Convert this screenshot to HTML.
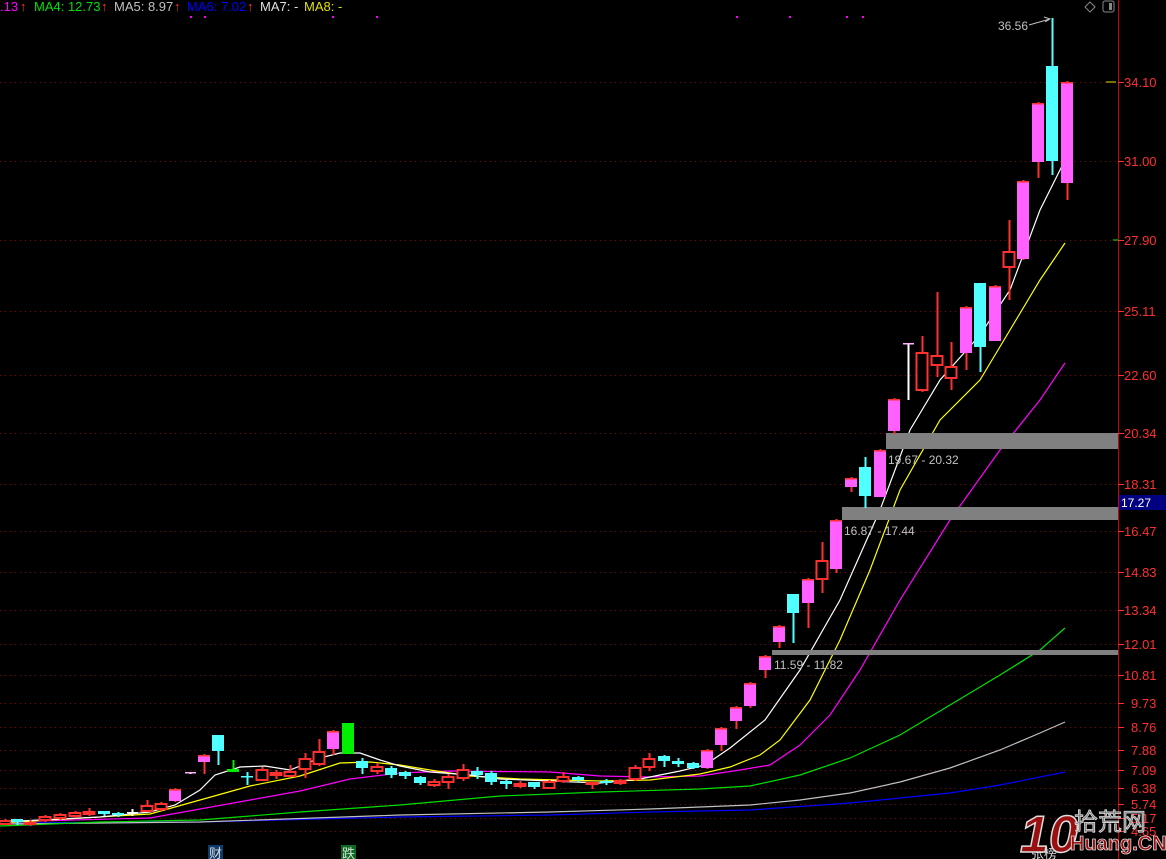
<!DOCTYPE html>
<html><head><meta charset="utf-8"><style>
html,body{margin:0;padding:0;background:#000;width:1166px;height:859px;overflow:hidden}
svg{display:block}
text{font-family:"Liberation Sans","Noto Sans CJK SC",sans-serif}
</style></head><body>
<svg id="s" width="1166" height="859" xmlns="http://www.w3.org/2000/svg">
<rect width="1166" height="859" fill="#000"/>
<g id="grid"></g>
<g id="ma" fill="none" stroke-width="1.2"></g>
<rect x="886" y="433" width="232" height="16" fill="#808080"/>
<rect x="842" y="507" width="276" height="13" fill="#808080"/>
<rect x="772" y="650" width="346" height="5" fill="#808080"/>
<g id="c"></g>
<g font-size="12" fill="#c0c0c0">
<text x="888" y="464">19.67 - 20.32</text>
<text x="844" y="535">16.87 - 17.44</text>
<text x="774" y="669">11.59 - 11.82</text>
<text x="998" y="30">36.56</text>
</g>
<path d="M1029 25 L1050 19 M1044 17 L1050 19 L1045 22" stroke="#c0c0c0" fill="none"/>
<line x1="1118.5" y1="0" x2="1118.5" y2="859" stroke="#d00000"/>
<g id="ax" font-size="13" fill="#ff3030"></g>
<rect x="1119" y="495" width="47" height="15" fill="#000080"/>
<text x="1121" y="507" font-size="12" fill="#fff">17.27</text>
<line x1="1106" y1="82" x2="1116" y2="82" stroke="#e0e000"/>
<line x1="1113" y1="240" x2="1118" y2="240" stroke="#00ff00"/>
<g font-size="13">
<text x="0" y="11" fill="#ff00ff">.13</text><text x="20" y="11" fill="#ff3030">↑</text>
<text x="34" y="11" fill="#00e000">MA4: 12.73</text><text x="101" y="11" fill="#ff3030">↑</text>
<text x="114" y="11" fill="#c0c0c0">MA5: 8.97</text><text x="174" y="11" fill="#ff3030">↑</text>
<text x="187" y="11" fill="#0000ff">MA6: 7.02</text><text x="247" y="11" fill="#ff3030">↑</text>
<text x="260" y="11" fill="#e0e0e0">MA7: -</text>
<text x="304" y="11" fill="#e0e000">MA8: -</text>
</g>
<g fill="#ff00ff" id="dots"></g>
<path d="M1090 2 L1095 7 L1090 12 L1085 7Z" stroke="#888" fill="none"/>
<rect x="1103" y="1" width="11" height="11" rx="2" stroke="#888" fill="none"/>
<rect x="1109" y="3" width="3" height="7" fill="#888"/>
<rect x="208" y="845" width="15" height="14" fill="#103a6a"/>
<text x="209" y="858" font-size="13" fill="#ddd">财</text>
<rect x="341" y="845" width="15" height="14" fill="#0a6a20"/>
<text x="342" y="858" font-size="13" fill="#ddd">跌</text>
<text x="1031" y="858" font-size="13" fill="#ddd">张榜</text>
<text x="1020" y="852" font-size="52" font-weight="bold" font-style="italic" fill="#9a1010" stroke="#ddd" stroke-width="1.5">10</text>
<text x="1074" y="830" font-size="24" fill="#777" stroke="#ddd" stroke-width="0.8">拾荒网</text>
<text x="1070" y="850" font-size="20" font-weight="bold" fill="#9a1010" stroke="#ddd" stroke-width="0.8">Huang.CN</text>
</svg>
<script>
var NS="http://www.w3.org/2000/svg";
function el(p,t,a){var e=document.createElementNS(NS,t);for(var k in a)e.setAttribute(k,a[k]);p.appendChild(e);return e;}
var labels=[["34.10",82],["31.00",161],["27.90",240],["25.11",311],["22.60",375],["20.34",433],["18.31",484],["16.47",531],["14.83",572],["13.34",610],["12.01",644],["10.81",675],["9.73",703],["8.76",727],["7.88",750],["7.09",770],["6.38",788],["5.74",804],["5.17",818],["4.65",831]];
var g=document.getElementById("grid"),ax=document.getElementById("ax");
labels.forEach(function(l){
 el(g,"line",{x1:0,y1:l[1]+.5,x2:1118,y2:l[1]+.5,stroke:"#8a0000","stroke-dasharray":"1 4"});
 el(ax,"line",{x1:1118,y1:l[1]+.5,x2:1124,y2:l[1]+.5,stroke:"#ff3030"});
 var t=el(ax,"text",{x:l[0].length==5?1124:1131,y:l[1]+5});t.textContent=l[0];
});
[190,204,332,376,736,789,846,862].forEach(function(x){el(document.getElementById("dots"),"rect",{x:x,y:16,width:2,height:2});});
var ma=document.getElementById("ma");
var lines=[
["#0000ff",[[0,823],[200,822],[400,817],[550,815],[650,812],[750,810],[850,803],[950,793],[1000,785],[1065,772]]],
["#c0c0c0",[[0,824],[200,822],[400,815],[550,812],[650,809],[750,805],[800,800],[850,793],[900,782],[950,768],[1000,750],[1040,733],[1065,722]]],
["#00e000",[[0,826],[100,822],[200,820],[300,812],[400,805],[500,796],[600,792],[700,789],[750,786],[800,775],[850,758],[900,735],[950,705],[1000,675],[1040,650],[1065,628]]],
["#ff00ff",[[0,822],[150,818],[250,800],[300,791],[350,779],[400,773],[450,771],[550,772],[600,776],[650,777],[700,776],[740,770],[770,765],[800,745],[830,715],[860,670],[900,600],[950,520],[1000,450],[1040,400],[1065,363]]],
["#ffff00",[[0,823],[150,814],[200,800],[250,786],[300,776],[340,763],[370,762],[400,765],[430,770],[470,776],[520,779],[600,781],[650,780],[700,774],[730,767],[760,755],[780,740],[810,700],[840,640],[870,570],[900,490],[940,420],[980,380],[1010,330],[1040,280],[1065,243]]],
["#ffffff",[[0,822],[100,817],[150,812],[175,805],[200,790],[215,775],[240,767],[265,766],[290,770],[320,758],[340,753],[360,753],[380,760],[400,766],[430,772],[470,775],[500,779],[550,781],[600,783],[640,779],[680,771],[705,765],[730,748],[765,720],[800,670],[840,600],[880,510],[910,430],[940,380],[980,335],[1010,290],[1040,210],[1065,160]]]];
lines.forEach(function(l){el(ma,"polyline",{points:l[1].map(function(p){return p.join(",")}).join(" "),stroke:l[0]});});
var col={r:"#ff3030",m:"#ff60ff",c:"#50ffff",g:"#00ee00",w:"#ffffff"};
var C=[
[5,"r",820,824,819,825],[17,"c",819,822,819,825],[30,"r",822,824,820,826],[45,"r",816,820,815,822],[60,"r",814,818,813,820],[75,"r",812,816,811,818],[89,"r",811,814,808,816],[104,"c",811,814,811,816],[118,"c",813,815,812,817],[132,"w",812,813,809,816],[147,"r",805,811,800,812],[161,"r",803,809,802,811],[175,"m",789,801,788,802],[190,"w",772,774,772,774],[204,"m",755,762,754,774],[218,"c",735,751,735,765],[233,"g",769,772,760,772],[247,"c",776,777,772,785],[262,"r",769,780,767,781],[276,"r",772,775,770,779],[290,"r",771,776,765,777],[305,"r",758,769,753,778],[319,"r",751,764,739,766],[333,"m",731,749,730,755],[348,"g",723,754,723,754],[362,"c",761,768,758,774],[377,"r",766,771,763,774],[391,"c",768,775,766,778],[405,"c",772,776,771,779],[420,"c",777,783,776,785],[434,"r",781,785,779,787],[448,"r",776,782,774,789],[463,"r",769,778,764,781],[477,"c",771,775,767,779],[491,"c",773,782,771,785],[506,"c",781,784,780,789],[520,"r",783,786,781,788],[534,"c",782,787,782,789],[549,"r",781,788,780,789],[563,"r",776,781,772,783],[578,"c",777,780,776,782],[592,"r",782,784,782,789],[606,"c",781,783,779,785],[620,"r",780,783,779,785],[635,"r",767,779,765,781],[649,"r",758,767,753,771],[664,"c",756,761,755,767],[678,"c",761,764,758,767],[693,"c",763,768,762,769],[707,"m",750,768,749,769],[721,"m",728,745,727,751],[736,"m",707,721,706,729],[750,"m",683,706,682,708],
[765,"m",656,670,655,678],[779,"m",626,642,625,648],[793,"c",594,613,594,643],[808,"m",579,603,578,628],[822,"r",560,579,542,593],[836,"m",520,569,519,573],[851,"m",478,487,477,492],[865,"c",467,496,457,508],[880,"m",450,497,449,497],[894,"m",399,431,398,434],[908,"w",343,344,343,400],[922,"r",352,390,336,392],[937,"r",355,365,292,377],[951,"r",366,378,342,390],[966,"m",307,353,306,370],[980,"c",283,347,283,372],[995,"m",286,341,285,341],[1009,"r",251,267,220,300],[1023,"m",181,259,180,260],[1038,"m",103,162,102,178],[1052,"c",66,161,18,175],[1067,"m",82,183,81,200]];
var cg=document.getElementById("c");
C.forEach(function(d){
 var x=d[0],k=d[1],c=col[k],wc=(k=="m")?"#ff3030":c,w=12;
 if(k=="w"){wc="#fff";}
 el(cg,"line",{x1:x+.5,y1:d[4],x2:x+.5,y2:d[5],stroke:wc,"stroke-width":2});
 var h=Math.max(d[3]-d[2],1.5);
 if(k=="r") el(cg,"rect",{x:x-5.5,y:d[2]+1,width:11,height:Math.max(h-1,1),fill:"#000",stroke:c,"stroke-width":2});
 else if(k=="w") el(cg,"rect",{x:x-5,y:d[2],width:11,height:1.5,fill:(x>150?"#ffb0ff":"#fff")});
 else el(cg,"rect",{x:x-6,y:d[2],width:w,height:h,fill:c});
 if(k=="m") el(cg,"rect",{x:x-6,y:d[2],width:w,height:1.5,fill:"#ff3030"});
});
</script>
</body></html>
